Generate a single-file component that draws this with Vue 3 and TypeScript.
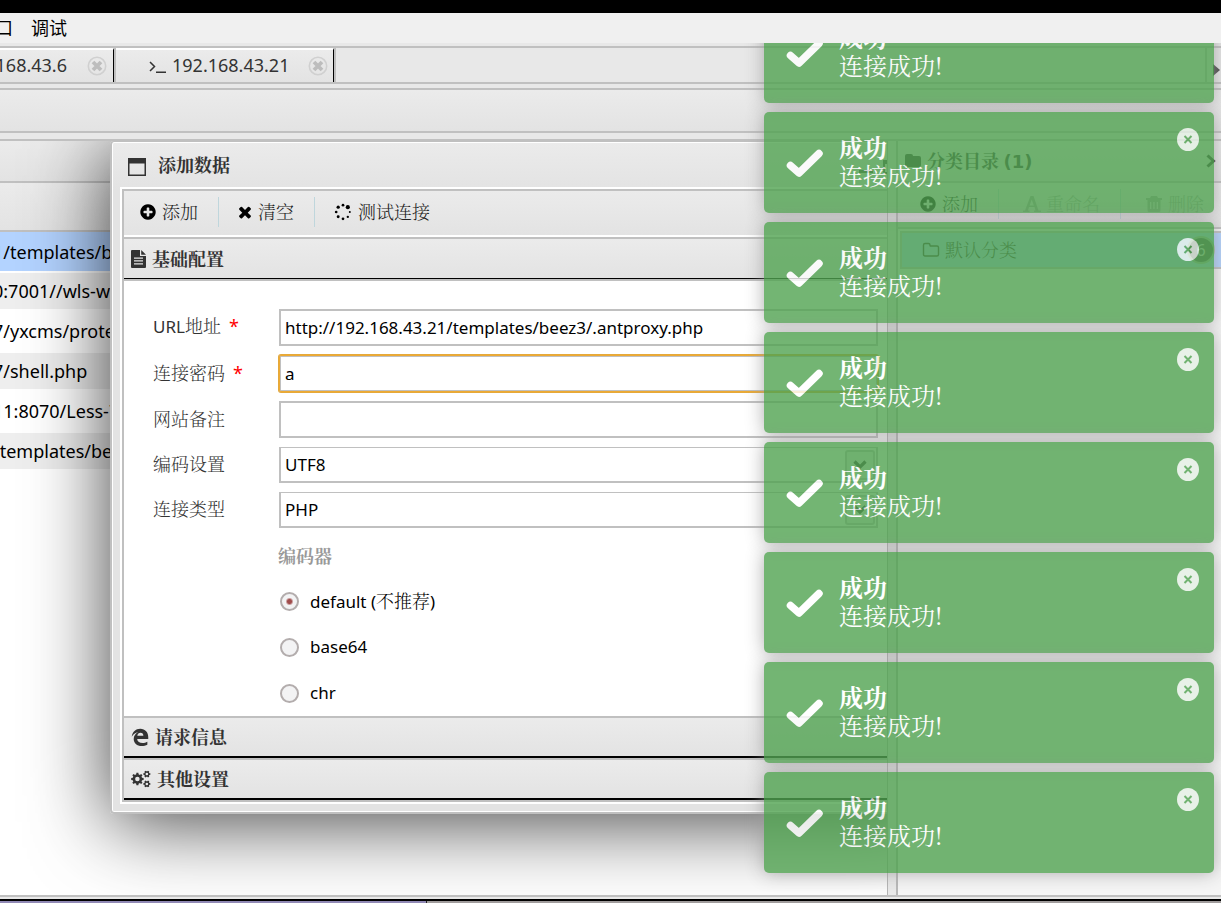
<script setup lang="ts">
import { ref } from 'vue'

interface Row { url: string; selected?: boolean }

const rows: Row[] = [
  { url: '1/templates/beez3/.antproxy.php', selected: true },
  { url: '0:7001//wls-wsat/shell.jsp' },
  { url: '7/yxcms/protected/apps' },
  { url: '7/shell.php' },
  { url: '11:8070/Less-7/' },
  { url: '/templates/beez3/' },
]

const url = ref('http://192.168.43.21/templates/beez3/.antproxy.php')
const password = ref('a')
const note = ref('')
const encoding = ref('UTF8')
const shellType = ref('PHP')
const encoder = ref('default')
const toasts = ref([1, 2, 3, 4, 5, 6, 7, 8])

const closeToast = (id: number) => {
  toasts.value = toasts.value.filter((t) => t !== id)
}

// Outline of a cog wheel with a round hole
const gear = (cx: number, cy: number, r: number, teeth: number): string => {
  const pts: string[] = []
  const step = (Math.PI * 2) / teeth
  for (let i = 0; i < teeth; i++) {
    const a = i * step
    for (const [k, f] of [[-0.32, 0.76], [-0.2, 1], [0.2, 1], [0.32, 0.76]]) {
      pts.push(`${(cx + Math.cos(a + k * step) * r * f).toFixed(2)} ${(cy + Math.sin(a + k * step) * r * f).toFixed(2)}`)
    }
  }
  const h = r * 0.36
  return `M${pts.join('L')}Z M${cx - h} ${cy}a${h} ${h} 0 1 0 ${2 * h} 0a${h} ${h} 0 1 0 ${-2 * h} 0Z`
}
const cogs = gear(7, 10, 7, 8) + gear(17.5, 4.5, 4, 6) + gear(17.5, 15.5, 4, 6)

const plusCircle = 'M1344 960v-128q0-26-19-45t-45-19h-256v-256q0-26-19-45t-45-19h-128q-26 0-45 19t-19 45v256h-256q-26 0-45 19t-19 45v128q0 26 19 45t45 19h256v256q0 26 19 45t45 19h128q26 0 45-19t19-45v-256h256q26 0 45-19t19-45zm320-64q0 209-103 385.5t-279.5 279.5-385.5 103-385.5-103-279.5-279.5-103-385.5 103-385.5 279.5-279.5 385.5-103 385.5 103 279.5 279.5 103 385.5z'
const times = 'M1490 1322q0 40-28 68l-136 136q-28 28-68 28t-68-28l-294-294-294 294q-28 28-68 28t-68-28l-136-136q-28-28-28-68t28-68l294-294-294-294q-28-28-28-68t28-68l136-136q28-28 68-28t68 28l294 294 294-294q28-28 68-28t68 28l136 136q28 28 28 68t-28 68l-294 294 294 294q28 28 28 68z'
const spinner = [
  [10, 2.5, 1.5], [15.3, 4.7, 2.3], [17.5, 10, 1.1], [15.3, 15.3, 1.3],
  [10, 17.5, 1.5], [4.7, 15.3, 1.6], [2.5, 10, 1.5], [4.7, 4.7, 1.8],
]
</script>

<template>
  <div class="app">
    <div class="screen-edge"></div>
    <nav class="menubar">
      <button type="button">窗口</button>
      <button type="button">调试</button>
    </nav>

    <div class="tabs">
      <div class="tab first">
        <span>168.43.6</span>
        <button type="button" class="tab-close" aria-label="关闭">
          <svg viewBox="0 0 20 20"><circle cx="10" cy="10" r="8.7" fill="none" stroke="#d0d0d0" stroke-width="1.6" /><path d="M6 6L14 14M14 6L6 14" stroke="#bdbdbd" stroke-width="3.8" /></svg>
        </button>
      </div>
      <div class="tab">
        <svg class="term" viewBox="0 0 17 16"><path d="M1 4l4.5 4.5L1 13M7 14.2h10" fill="none" stroke="#333" stroke-width="1.5" /></svg>
        <span>192.168.43.21</span>
        <button type="button" class="tab-close" aria-label="关闭">
          <svg viewBox="0 0 20 20"><circle cx="10" cy="10" r="8.7" fill="none" stroke="#d0d0d0" stroke-width="1.6" /><path d="M6 6L14 14M14 6L6 14" stroke="#bdbdbd" stroke-width="3.8" /></svg>
        </button>
      </div>
      <button type="button" class="tab-scroll" aria-label="下一个">
        <svg viewBox="0 0 7 12"><path d="M0 0l7 6-7 6z" fill="#444" /></svg>
      </button>
    </div>
    <div class="subbar"></div>

    <main class="main">
      <section class="list">
        <div class="list-title"></div>
        <table class="grid">
          <thead><tr><th></th></tr></thead>
          <tbody>
            <tr v-for="(row, i) in rows" :key="i" :class="{ selected: row.selected, even: i % 2 === 1 }">
              <td>{{ row.url }}</td>
            </tr>
          </tbody>
        </table>

        <div class="dialog" role="dialog" aria-labelledby="dlg-title">
          <header class="dlg-head">
            <svg class="i18" viewBox="0 0 18 18"><path fill="#333" fill-rule="evenodd" d="M0 0h18v18H0zM1.5 5.5v11h15v-11z" /></svg>
            <h2 id="dlg-title">添加数据</h2>
            <button type="button" aria-label="最小化"><svg viewBox="0 0 14 14"><path d="M0 10h14v3H0z" fill="#444" /></svg></button>
            <button type="button" aria-label="最大化"><svg viewBox="0 0 14 14"><path d="M0 0h14v14H0zM2 4v8h10V4z" fill="#444" fill-rule="evenodd" /></svg></button>
          </header>
          <div class="dlg-body">
            <div class="toolbar">
              <button type="button"><svg class="i18" viewBox="0 0 1792 1792"><path :d="plusCircle" /></svg><span>添加</span></button>
              <button type="button"><svg class="i16" viewBox="96 96 1600 1600"><path :d="times" /></svg><span>清空</span></button>
              <button type="button">
                <svg class="i20" viewBox="-1 -1 22 22"><circle v-for="(c, i) in spinner" :key="i" :cx="c[0]" :cy="c[1]" :r="c[2]" /></svg><span>测试连接</span>
              </button>
            </div>

            <button type="button" class="acc open">
              <svg class="acc-file" viewBox="0 0 15 18"><path fill="#333" fill-rule="evenodd" d="M0 1q0-1 1-1h8v6h6v11q0 1-1 1H1q-1 0-1-1zM3 7.5v1.3h9V7.500zM3 10.300v1.300h9v-1.300zM3 13.200v1.300h9v-1.300zM10.200 0l4.800 4.800h-4.800z" /></svg><span>基础配置</span>
            </button>
            <form class="form" @submit.prevent>
              <div class="field">
                <label for="f-url"><span class="latin">URL</span>地址<b>*</b></label>
                <input id="f-url" v-model="url" type="text" />
              </div>
              <div class="field">
                <label for="f-pwd">连接密码<b>*</b></label>
                <input id="f-pwd" v-model="password" class="active" type="text" />
              </div>
              <div class="field">
                <label for="f-note">网站备注</label>
                <input id="f-note" v-model="note" type="text" />
              </div>
              <div class="field">
                <label for="f-enc">编码设置</label>
                <div class="combo">
                  <select id="f-enc" v-model="encoding"><option>UTF8</option><option>GBK</option></select>
                  <span class="drop"><svg viewBox="0 0 14 10"><path d="M1.500 1.500L7 7l5.500-5.500" fill="none" stroke="#333" stroke-width="3.200" /></svg></span>
                </div>
              </div>
              <div class="field">
                <label for="f-type">连接类型</label>
                <div class="combo">
                  <select id="f-type" v-model="shellType"><option>PHP</option><option>ASP</option></select>
                  <span class="drop"><svg viewBox="0 0 14 10"><path d="M1.500 1.500L7 7l5.500-5.500" fill="none" stroke="#333" stroke-width="3.200" /></svg></span>
                </div>
              </div>
              <fieldset class="encoders">
                <legend>编码器</legend>
                <label><input v-model="encoder" type="radio" name="encoder" value="default" /><span>default (<i>不推荐</i>)</span></label>
                <label><input v-model="encoder" type="radio" name="encoder" value="base64" /><span>base64</span></label>
                <label><input v-model="encoder" type="radio" name="encoder" value="chr" /><span>chr</span></label>
              </fieldset>
            </form>
            <button type="button" class="acc">
              <svg class="i18" viewBox="0 0 24 24"><path fill="#333" fill-rule="evenodd" d="M1 11.500C1.800 5.200 6.300 1 12.300 1C19 1 23 5.800 23 12v2.600H8.200c.2 3.600 3.400 5.400 7.200 5.400 2.400 0 4.400-.6 6.400-1.700V22.400C19.600 23.500 17 24 14.400 24 7.800 24 3.600 20 3.600 14.600c0-4 2.300-7.200 6-8.800C5.500 6.300 3 8.300 1 11.500zM8.400 10.400h8.100c0-2.600-1.400-4.200-3.800-4.200-2.300 0-4 1.600-4.300 4.200z" /></svg><span>请求信息</span>
            </button>
            <button type="button" class="acc">
              <svg class="acc-cogs" viewBox="0 0 22 20"><path fill="#333" fill-rule="evenodd" :d="cogs" /></svg><span>其他设置</span>
            </button>
          </div>
        </div>
      </section>

      <div class="splitter"></div>

      <aside class="side">
        <header class="side-head">
          <svg class="i18" viewBox="0 0 18 18"><path d="M1 4q0-2 2-2h4q2 0 2 2h6q2 0 2 2v7q0 2-2 2H3q-2 0-2-2z" fill="#333" /></svg>
          <h2>分类目录 <span class="count">(1)</span></h2>
          <svg class="chev" viewBox="0 0 10 14"><path d="M1.500 1.500L7.500 7l-6 5.500" fill="none" stroke="#333" stroke-width="3" /></svg>
        </header>
        <div class="side-tools">
          <button type="button"><svg class="i18" viewBox="0 0 1792 1792"><path :d="plusCircle" /></svg><span>添加</span></button>
          <button type="button" disabled><svg class="i18" viewBox="0 0 18 18"><path fill-rule="evenodd" d="M7.500 1h3l5 14.500H18V17h-7v-1.500h1.500L11.500 12H6l-1 3.500h1.500V17H0v-1.500h2zM8.700 4.500L6.600 10.500h4.300z" /></svg><span>重命名</span></button>
          <button type="button" disabled><svg class="i18" viewBox="0 0 18 18"><path fill-rule="evenodd" d="M6 1h6l1 2h4v2h-1.500v10.500q0 1.500-1.500 1.500H4q-1.500 0-1.500-1.500V5H1V3h4zM5 7v7h1.300V7zM8.300 7v7h1.300V7zM11.700 7v7H13V7z" /></svg><span>删除</span></button>
        </div>
        <a class="category" href="#">
          <svg class="i18" viewBox="0 0 18 18"><path d="M1.500 4q0-1.500 1.500-1.500h3.500Q8 2.500 8 4t1 1h6q1.500 0 1.500 1.500v7q0 1.500-1.500 1.500H3q-1.500 0-1.500-1.500z" fill="none" stroke="#333" stroke-width="1.400" /></svg>
          <span>默认分类</span><em>6</em>
        </a>
      </aside>
    </main>

    <footer class="taskbar"><span></span></footer>

    <div class="toasts" aria-live="polite">
      <div v-for="t in toasts" :key="t" class="toast">
        <svg class="check" viewBox="0 0 37 28"><path d="M4.500 16.500l8.500 7.500L33 4.500" fill="none" stroke="#fff" stroke-width="7.500" stroke-linecap="round" stroke-linejoin="round" /></svg>
        <div>
          <strong>成功</strong>
          <p>连接成功!</p>
        </div>
        <button type="button" aria-label="关闭" @click="closeToast(t)">
          <svg viewBox="0 0 22 23"><path d="M7.500 8l7 7M14.500 8l-7 7" stroke="#51a351" stroke-width="2" /></svg>
        </button>
      </div>
    </div>
  </div>
</template>

<style>
body { margin: 0; overflow: hidden; }
</style>

<style scoped>
* { box-sizing: border-box; }
.app {
  --line: #c0c0c0;
  --panel: linear-gradient(#ebebeb, #e3e3e3);
  --latin: "Noto Sans", "Open Sans", sans-serif;
  --song: "Noto Serif CJK SC", "Noto Sans CJK SC", serif;
  position: relative;
  display: flex;
  flex-direction: column;
  height: 100vh;
  overflow: hidden;
  background: #e8e8e8;
  color: #333;
  font: 300 18px/24px var(--song);
}
button { font: inherit; color: inherit; background: none; border: 0; padding: 0; }
svg { display: block; flex: none; }
.latin { font-family: var(--latin); font-weight: 400; font-size: 17px; }
.i16 { width: 16px; height: 16px; }
.i18 { width: 18px; height: 18px; }
.i20 { width: 20px; height: 20px; }

.screen-edge { height: 13px; background: #000; }
.menubar {
  display: flex;
  gap: 18px;
  height: 30px;
  margin-left: -23px;
  padding: 3px 0 4px;
  background: #f0f0f0;
  color: #000;
  font-family: "Noto Sans CJK SC", sans-serif;
  font-weight: 400;
}
.menubar button { line-height: 23px; }

.tabs {
  display: flex;
  height: 38px;
  margin-top: 3px;
  border-top: 2px solid var(--line);
  border-bottom: 2px solid var(--line);
  font-family: var(--latin);
  font-weight: 400;
}
.tab {
  display: flex;
  align-items: center;
  gap: 6px;
  width: 218px;
  height: 34px;
  padding: 0 5px 0 33px;
  border-top: 2px solid #fff;
  border-right: 1px solid #000;
  box-shadow: 2px 0 var(--line);
  margin-right: 2px;
  background: var(--panel);
}
.tab span { padding-bottom: 2px; }
.tab.first { width: 114px; padding-left: 0; padding-right: 6px; justify-content: flex-end; }
.term { width: 17px; height: 16px; }
.tab-close { margin-left: auto; }
.tab.first .tab-close { margin-left: 14px; }
.tab-close svg { width: 20px; height: 20px; }
.tab-scroll { display: flex; align-items: center; justify-content: flex-end; margin-left: auto; width: 16px; padding: 10px 1px 0 0; border-left: 2px solid var(--line); }
.tab-scroll svg { width: 7px; height: 12px; }
.subbar { height: 45px; margin: 4px 0 6px; border: solid var(--line); border-width: 2px 0; background: var(--panel); }

.main { flex: 1; display: flex; min-height: 0; border: solid var(--line); border-width: 2px 0; }
.list { position: relative; flex: 1; min-width: 0; overflow: hidden; background: #fff; border-right: 1px solid #b4b4b4; }
.list-title { height: 42px; background: var(--panel); border-bottom: 2px solid var(--line); }
.grid { width: 100%; border-collapse: collapse; color: #000; font: 400 18px/24px var(--latin); table-layout: fixed; }
.grid th { height: 48px; padding: 0; background: var(--panel); border-bottom: 2px solid var(--line); }
.grid td { height: 40px; padding: 0; text-indent: -7px; white-space: nowrap; }
.grid .even td { background: linear-gradient(#fff 2px, #eee 2px, #eee 38px, #fff 38px); }
.grid .selected td { background: #b3d3ff; }

.dialog {
  position: absolute;
  top: 0;
  left: 110px;
  right: -42px;
  padding: 0 8px 8px;
  border: 2px solid var(--line);
  border-top-width: 1px;
  border-radius: 4px;
  background: linear-gradient(#ebebeb, #e3e3e3 48px);
  box-shadow: inset 0 0 0 1px #fff, 0 8px 80px rgba(0, 0, 0, .75);
}
.dlg-head { display: flex; align-items: center; gap: 10px; height: 45px; padding: 4px 22px 0 8px; }
.dlg-head h2 { flex: 1; margin: 0; padding: 0 0 6px 2px; font-size: 18px; line-height: 24px; font-weight: 700; }
.dlg-head button svg { width: 14px; height: 14px; }
.dlg-body { border: 2px solid #fff; outline: 2px solid var(--line); outline-offset: -4px; padding: 2px; background: #fff; }
.toolbar { display: flex; align-items: center; height: 44px; padding-bottom: 2px; background: var(--panel); }
.toolbar button, .side-tools button { display: flex; align-items: center; gap: 5px; height: 30px; padding: 0 20px 0 15px; color: #222; }
.toolbar button + button { border-left: 1px solid #bfd6dc; padding-left: 18px; }
.toolbar span, .side-tools span, .acc span { padding-bottom: 3px; }
.acc {
  display: flex;
  align-items: center;
  gap: 6px;
  width: 100%;
  height: 42px;
  padding: 0 7px;
  border-top: 2px solid var(--line);
  border-bottom: 2px solid #000;
  background: var(--panel);
  font-weight: 700;
}
.acc.open { height: 44px; margin-top: 2px; border-bottom: 2px solid var(--line); box-shadow: inset 0 -1px #000; }
.acc-file { width: 15px; height: 18px; }
.acc-cogs { width: 20px; height: 18px; }

.form { display: flex; flex-direction: column; gap: 9px; padding: 28px 37px 0 29px; color: #000; }
.field { display: flex; align-items: center; }
.field label { width: 126px; flex: none; padding-bottom: 4px; color: #333; }
.field b { margin-left: 8px; color: #f00; font: 400 18px/20px var(--latin); }
.field input, .field select {
  flex: 1;
  width: 100%;
  height: 37px;
  padding: 0 4px;
  border: 2px solid var(--line);
  border-radius: 0;
  outline: none;
  appearance: none;
  background: #fff;
  color: #000;
  font: 400 17px/24px var(--latin);
}
.field select { height: 36px; border-top-width: 1px; display: block; }
.field input.active { outline: 1px solid #eeaa33; border-radius: 2px; box-shadow: 0 0 0 1px #e5a93a; outline-offset: -1px; }
.combo { position: relative; flex: 1; }
.drop { position: absolute; top: 3px; right: 3px; display: grid; place-items: center; width: 30px; height: 30px; border: 2px solid var(--line); border-radius: 3px; background: #ececec; pointer-events: none; }
.drop svg { width: 14px; height: 10px; }
.encoders { display: flex; flex-direction: column; margin: 0 0 0 125px; padding: 0; border: 0; font: 400 17px/24px var(--latin); }
.encoders legend { padding: 6px 0 11px; color: #999; font: 700 18px/24px var(--song); }
.encoders label { display: flex; align-items: center; gap: 11px; height: 46px; }
.encoders i { font: 300 18px/24px var(--song); }
.encoders input { appearance: none; width: 19px; height: 19px; margin: 0 0 0 2px; border: 2px solid #b3adad; border-radius: 50%; background: #f3f3f4; }
.encoders input:checked { background: radial-gradient(circle, #a04c4c 2px, #f3f3f4 4px); }

.splitter { width: 8px; background: #e9e9e9; }
.side { width: 325px; flex: none; border-left: 2px solid #b8b8b8; background: #f5f5f5; overflow: hidden; }
.side-head { display: flex; align-items: center; gap: 5px; height: 42px; padding: 0 5px 0 6px; border-bottom: 2px solid var(--line); background: var(--panel); }
.side-head h2 { flex: 1; margin: 0; font-size: 18px; line-height: 24px; font-weight: 700; }
.side-head .count { font: 700 18px/24px "DejaVu Sans", sans-serif; }
.chev { width: 10px; height: 14px; }
.side-tools { display: flex; align-items: center; height: 46px; padding: 0 0 2px 6px; border-bottom: 2px solid var(--line); background: var(--panel); }
.side-tools button { white-space: nowrap; }
.side-tools button + button { border-left: 1px solid #bfd6dc; padding-left: 24px; }
.side-tools button:disabled { color: #aaa; fill: #aaa; }
.category { display: flex; align-items: center; gap: 5px; height: 38px; margin: 2px 0 0 2px; padding: 0 6px 0 20px; border: solid var(--line); border-width: 2px 0 2px 2px; background: #b3d3ff; color: #333; text-decoration: none; }
.category span { padding-bottom: 3px; }
.category em { display: grid; place-items: center; width: 28px; height: 28px; margin-left: auto; border: 2px solid #a8b8a8; border-radius: 50%; background: #555; color: #ddd; font: 400 16px/20px var(--latin); }

.taskbar { height: 6px; border-top: 2px solid #e9e9e9; background: #a09c9c; box-shadow: inset 0 2px #000; }
.taskbar span { display: block; width: 35%; height: 2px; margin-top: 2px; border-right: 1px solid #222; background: #9089b5; }

.toasts {
  position: absolute;
  top: 43px;
  right: 0;
  bottom: 0;
  display: flex;
  flex-direction: column;
  justify-content: flex-end;
  gap: 9px;
  width: 482px;
  padding: 0 7px 30px 25px;
  overflow: hidden;
}
.toast {
  display: flex;
  flex: none;
  align-items: flex-start;
  height: 101px;
  padding: 21px 15px 0 22px;
  border-radius: 5px;
  background: #51a351;
  box-shadow: 0 0 18px #999;
  color: #fff;
  opacity: .8;
  font-size: 24px;
  line-height: 28px;
  font-weight: 400;
}
.check { width: 37px; height: 28px; margin: 16px 16px 0 0; }
.toast strong { display: block; font-weight: 700; }
.toast p { margin: 0; }
.toast button { margin: -5px 0 0 auto; border-radius: 50%; background: rgba(255, 255, 255, .85); }
.toast button svg { width: 22px; height: 23px; }
</style>
